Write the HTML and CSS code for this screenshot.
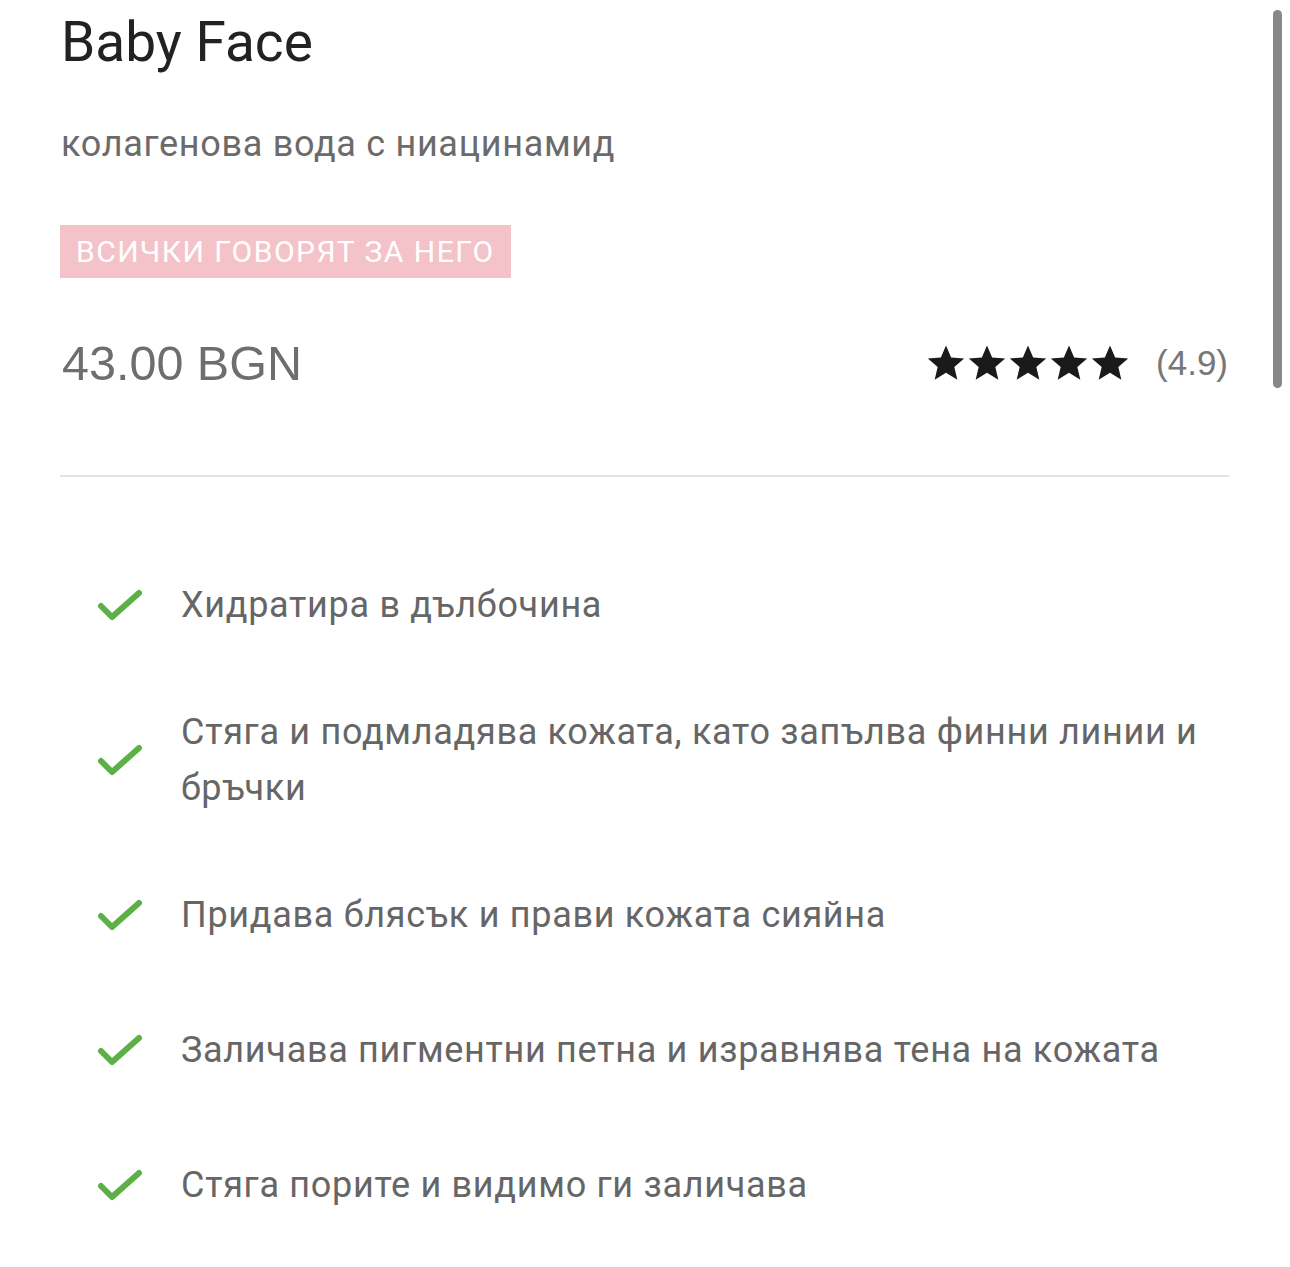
FILE: index.html
```html
<!DOCTYPE html>
<html lang="bg">
<head>
<meta charset="utf-8">
<link rel="stylesheet" href="styles.css">
</head>
<body>
<div class="page">
  <h1 class="title">Baby Face</h1>
  <p class="subtitle">колагенова вода с ниацинамид</p>
  <div class="badge-row"><span class="badge">ВСИЧКИ ГОВОРЯТ ЗА НЕГО</span></div>
  <div class="price-row">
    <span class="price">43.00 BGN</span>
    <span class="rating">
      <span class="stars">
        <svg viewBox="0 0 24 24"><path d="M12 1.5l3.1 7.2 7.8.6-5.9 5.1 1.8 7.6L12 17.9 5.2 22l1.8-7.6L1.1 9.3l7.8-.6z"/></svg>
        <svg viewBox="0 0 24 24"><path d="M12 1.5l3.1 7.2 7.8.6-5.9 5.1 1.8 7.6L12 17.9 5.2 22l1.8-7.6L1.1 9.3l7.8-.6z"/></svg>
        <svg viewBox="0 0 24 24"><path d="M12 1.5l3.1 7.2 7.8.6-5.9 5.1 1.8 7.6L12 17.9 5.2 22l1.8-7.6L1.1 9.3l7.8-.6z"/></svg>
        <svg viewBox="0 0 24 24"><path d="M12 1.5l3.1 7.2 7.8.6-5.9 5.1 1.8 7.6L12 17.9 5.2 22l1.8-7.6L1.1 9.3l7.8-.6z"/></svg>
        <svg viewBox="0 0 24 24"><path d="M12 1.5l3.1 7.2 7.8.6-5.9 5.1 1.8 7.6L12 17.9 5.2 22l1.8-7.6L1.1 9.3l7.8-.6z"/></svg>
      </span>
      <span class="score">(4.9)</span>
    </span>
  </div>
  <hr class="divider">
  <ul class="features">
    <li><svg class="check" viewBox="0 0 46 34"><path d="M4 18l11 11L42 5"/></svg><span>Хидратира в дълбочина</span></li>
    <li><svg class="check" viewBox="0 0 46 34"><path d="M4 18l11 11L42 5"/></svg><span>Стяга и подмладява кожата, като запълва финни линии и бръчки</span></li>
    <li><svg class="check" viewBox="0 0 46 34"><path d="M4 18l11 11L42 5"/></svg><span>Придава блясък и прави кожата сияйна</span></li>
    <li><svg class="check" viewBox="0 0 46 34"><path d="M4 18l11 11L42 5"/></svg><span>Заличава пигментни петна и изравнява тена на кожата</span></li>
    <li><svg class="check" viewBox="0 0 46 34"><path d="M4 18l11 11L42 5"/></svg><span>Стяга порите и видимо ги заличава</span></li>
  </ul>
</div>
<div class="scrollbar"></div>
</body>
</html>
```
FILE: styles.css
```css
html, body {
  margin: 0;
  padding: 0;
  background: #fff;
}
body {
  font-family: Roboto, "Noto Sans", sans-serif;
  width: 1290px;
  height: 1267px;
  overflow: hidden;
  position: relative;
}
.page {
  padding: 10px 61px 0 60px;
}
.title {
  margin: 0;
  font-weight: 400;
  font-size: 55px;
  line-height: 64px;
  color: #222;
  padding-left: 1px;
}
.subtitle {
  margin: 50px 0 0 1px;
  font-size: 36px;
  line-height: 40px;
  color: #6b6b6b;
  letter-spacing: 0.7px;
}
.badge-row {
  margin-top: 61px;
  display: flex;
}
.badge {
  background: #f4c3ca;
  color: #fff;
  font-size: 30px;
  letter-spacing: 1.5px;
  line-height: 53px;
  padding: 0 16px;
}
.price-row {
  margin-top: 55px;
  display: flex;
  justify-content: space-between;
  align-items: center;
  height: 60px;
}
.price {
  font-family: "Liberation Sans", Arial, sans-serif;
  font-size: 48.5px;
  color: #6e6e6e;
  padding-left: 2px;
}
.rating {
  display: flex;
  align-items: center;
  gap: 26px;
  padding-right: 1px;
}
.stars {
  display: flex;
  gap: 1px;
}
.stars svg {
  width: 40px;
  height: 40px;
  fill: #1a1a1a;
}
.score {
  font-family: "Liberation Sans", Arial, sans-serif;
  font-size: 35px;
  color: #777;
}
.divider {
  margin: 82px 0 0 0;
  border: 0;
  height: 2px;
  background: #e2e2e2;
}
.features {
  list-style: none;
  margin: 92px 0 0 0;
  padding: 0 0 0 37px;
  display: flex;
  flex-direction: column;
  gap: 63px;
}
.features li {
  display: flex;
  align-items: center;
  gap: 38px;
  min-height: 72px;
  font-size: 36px;
  line-height: 56px;
  color: #666;
  letter-spacing: 0.7px;
}
.check {
  width: 46px;
  height: 34px;
  flex: none;
  fill: none;
  stroke: #5cb046;
  stroke-width: 6;
  stroke-linecap: round;
  stroke-linejoin: round;
}
.scrollbar {
  position: absolute;
  right: 8px;
  top: 10px;
  width: 9px;
  height: 378px;
  border-radius: 5px;
  background: #878787;
}
```
